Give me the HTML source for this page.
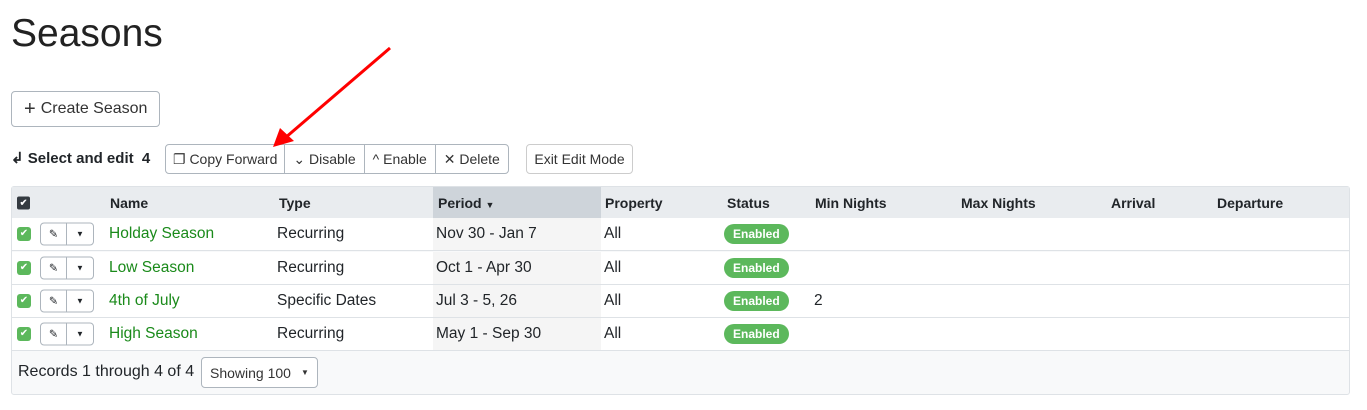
<!DOCTYPE html>
<html><head><meta charset="utf-8"><style>
*{box-sizing:border-box;margin:0;padding:0}
body{width:1367px;height:410px;background:#fff;font-family:"Liberation Sans",Arial,sans-serif;color:#212529;position:relative;overflow:hidden}
.a{position:absolute;white-space:nowrap}
h1{position:absolute;left:11px;top:12px;font-size:39px;font-weight:400;color:#222}
.btn{position:absolute;border:1px solid #adb5bd;border-radius:4px;background:#fff;font-size:14px;color:#333;display:flex;align-items:center}
.grp span{height:100%;display:flex;align-items:center;padding:0 8px;border-right:1px solid #adb5bd}
.grp span:last-child{border-right:none}
.tbl{position:absolute;left:11px;top:186px;width:1339px;height:209px;border:1px solid #dee2e6;border-radius:3px;background:#f8f9fa}
.hd{position:absolute;left:0;top:0;width:100%;height:31px;background:#e9ecef;font-weight:700;font-size:14px}
.row{position:absolute;left:0;width:100%;height:33px;background:#fff;border-bottom:1px solid #dee2e6;font-size:15.5px}
.row .a,.hd .a{top:50%;transform:translateY(-50%)}
.chk{width:14px;height:14px;border-radius:3px;background:#5cb85c;left:5px;color:#fff;font-size:10px;text-align:center;line-height:14px}
.eb{left:28px;width:54px;height:23px;border:1px solid #adb5bd;border-radius:4px;display:flex}
.eb i{display:flex;align-items:center;justify-content:center;font-style:normal;font-size:11px}
.nm{left:97px;color:#1a8a1a}
.pc{position:absolute;left:421px;top:0;width:168px;height:100%;background:#f5f5f5}
.en{left:712px;background:#5cb85c;color:#fff;font-size:12px;font-weight:700;border-radius:10px;padding:3px 9px}
</style></head><body>
<h1>Seasons</h1>
<div class="btn" style="left:11px;top:91px;width:149px;height:36px;padding-left:12px;font-size:16px"><span style="font-size:20px;margin-right:5px">+</span>Create Season</div>
<div class="a" style="left:11px;top:149px;font-size:15px;font-weight:700">&#x21B2;&nbsp;Select and edit&nbsp; 4</div>
<div class="btn grp" style="left:165px;top:144px;height:30px;font-size:14px">
<span style="padding:0 7px">&#x2750;&nbsp;Copy Forward</span><span>&#8964;&nbsp;Disable</span><span>^&nbsp;Enable</span><span>✕&nbsp;Delete</span></div>
<div class="btn" style="left:526px;top:144px;width:107px;height:30px;justify-content:center;border-color:#ccc">Exit Edit Mode</div>
<svg class="a" style="left:0;top:0" width="420" height="160"><line x1="390" y1="48" x2="285" y2="138" stroke="#f00" stroke-width="3"/><polygon points="273,147 280,128 294,141" fill="#f00"/></svg>
<div class="tbl">
<div class="hd"><div class="pc" style="background:#ced4da"></div>
<div class="a" style="left:5px;width:13px;height:13px;background:#343a40;border-radius:2px;color:#fff;font-size:9px;text-align:center;line-height:13px">✔</div>
<div class="a" style="left:98px">Name</div><div class="a" style="left:267px">Type</div><div class="a" style="left:426px">Period <span style="font-size:9px">▼</span></div>
<div class="a" style="left:593px">Property</div><div class="a" style="left:715px">Status</div><div class="a" style="left:803px">Min Nights</div><div class="a" style="left:949px">Max Nights</div><div class="a" style="left:1099px">Arrival</div><div class="a" style="left:1205px">Departure</div></div>
<div class="row" style="top:31px"><div class="pc"></div><div class="a chk">✔</div><div class="a eb"><i style="width:26px;border-right:1px solid #adb5bd">✎</i><i style="width:26px;font-size:8px">▼</i></div><div class="a nm">Holday Season</div><div class="a" style="left:265px">Recurring</div><div class="a" style="left:424px">Nov 30 - Jan 7</div><div class="a" style="left:592px">All</div><div class="a en">Enabled</div></div>
<div class="row" style="top:65px"><div class="pc"></div><div class="a chk">✔</div><div class="a eb"><i style="width:26px;border-right:1px solid #adb5bd">✎</i><i style="width:26px;font-size:8px">▼</i></div><div class="a nm">Low Season</div><div class="a" style="left:265px">Recurring</div><div class="a" style="left:424px">Oct 1 - Apr 30</div><div class="a" style="left:592px">All</div><div class="a en">Enabled</div></div>
<div class="row" style="top:98px"><div class="pc"></div><div class="a chk">✔</div><div class="a eb"><i style="width:26px;border-right:1px solid #adb5bd">✎</i><i style="width:26px;font-size:8px">▼</i></div><div class="a nm">4th of July</div><div class="a" style="left:265px">Specific Dates</div><div class="a" style="left:424px">Jul 3 - 5, 26</div><div class="a" style="left:592px">All</div><div class="a en">Enabled</div><div class="a" style="left:802px">2</div></div>
<div class="row" style="top:131px"><div class="pc"></div><div class="a chk">✔</div><div class="a eb"><i style="width:26px;border-right:1px solid #adb5bd">✎</i><i style="width:26px;font-size:8px">▼</i></div><div class="a nm">High Season</div><div class="a" style="left:265px">Recurring</div><div class="a" style="left:424px">May 1 - Sep 30</div><div class="a" style="left:592px">All</div><div class="a en">Enabled</div></div>
<div class="a" style="left:6px;top:176px;font-size:16px">Records 1 through 4 of 4</div>
<div class="btn" style="left:189px;top:170px;width:117px;height:31px;padding-left:8px;font-size:14px">Showing 100 <span style="font-size:8px;margin-left:10px">▼</span></div>
</div>
</body></html>
